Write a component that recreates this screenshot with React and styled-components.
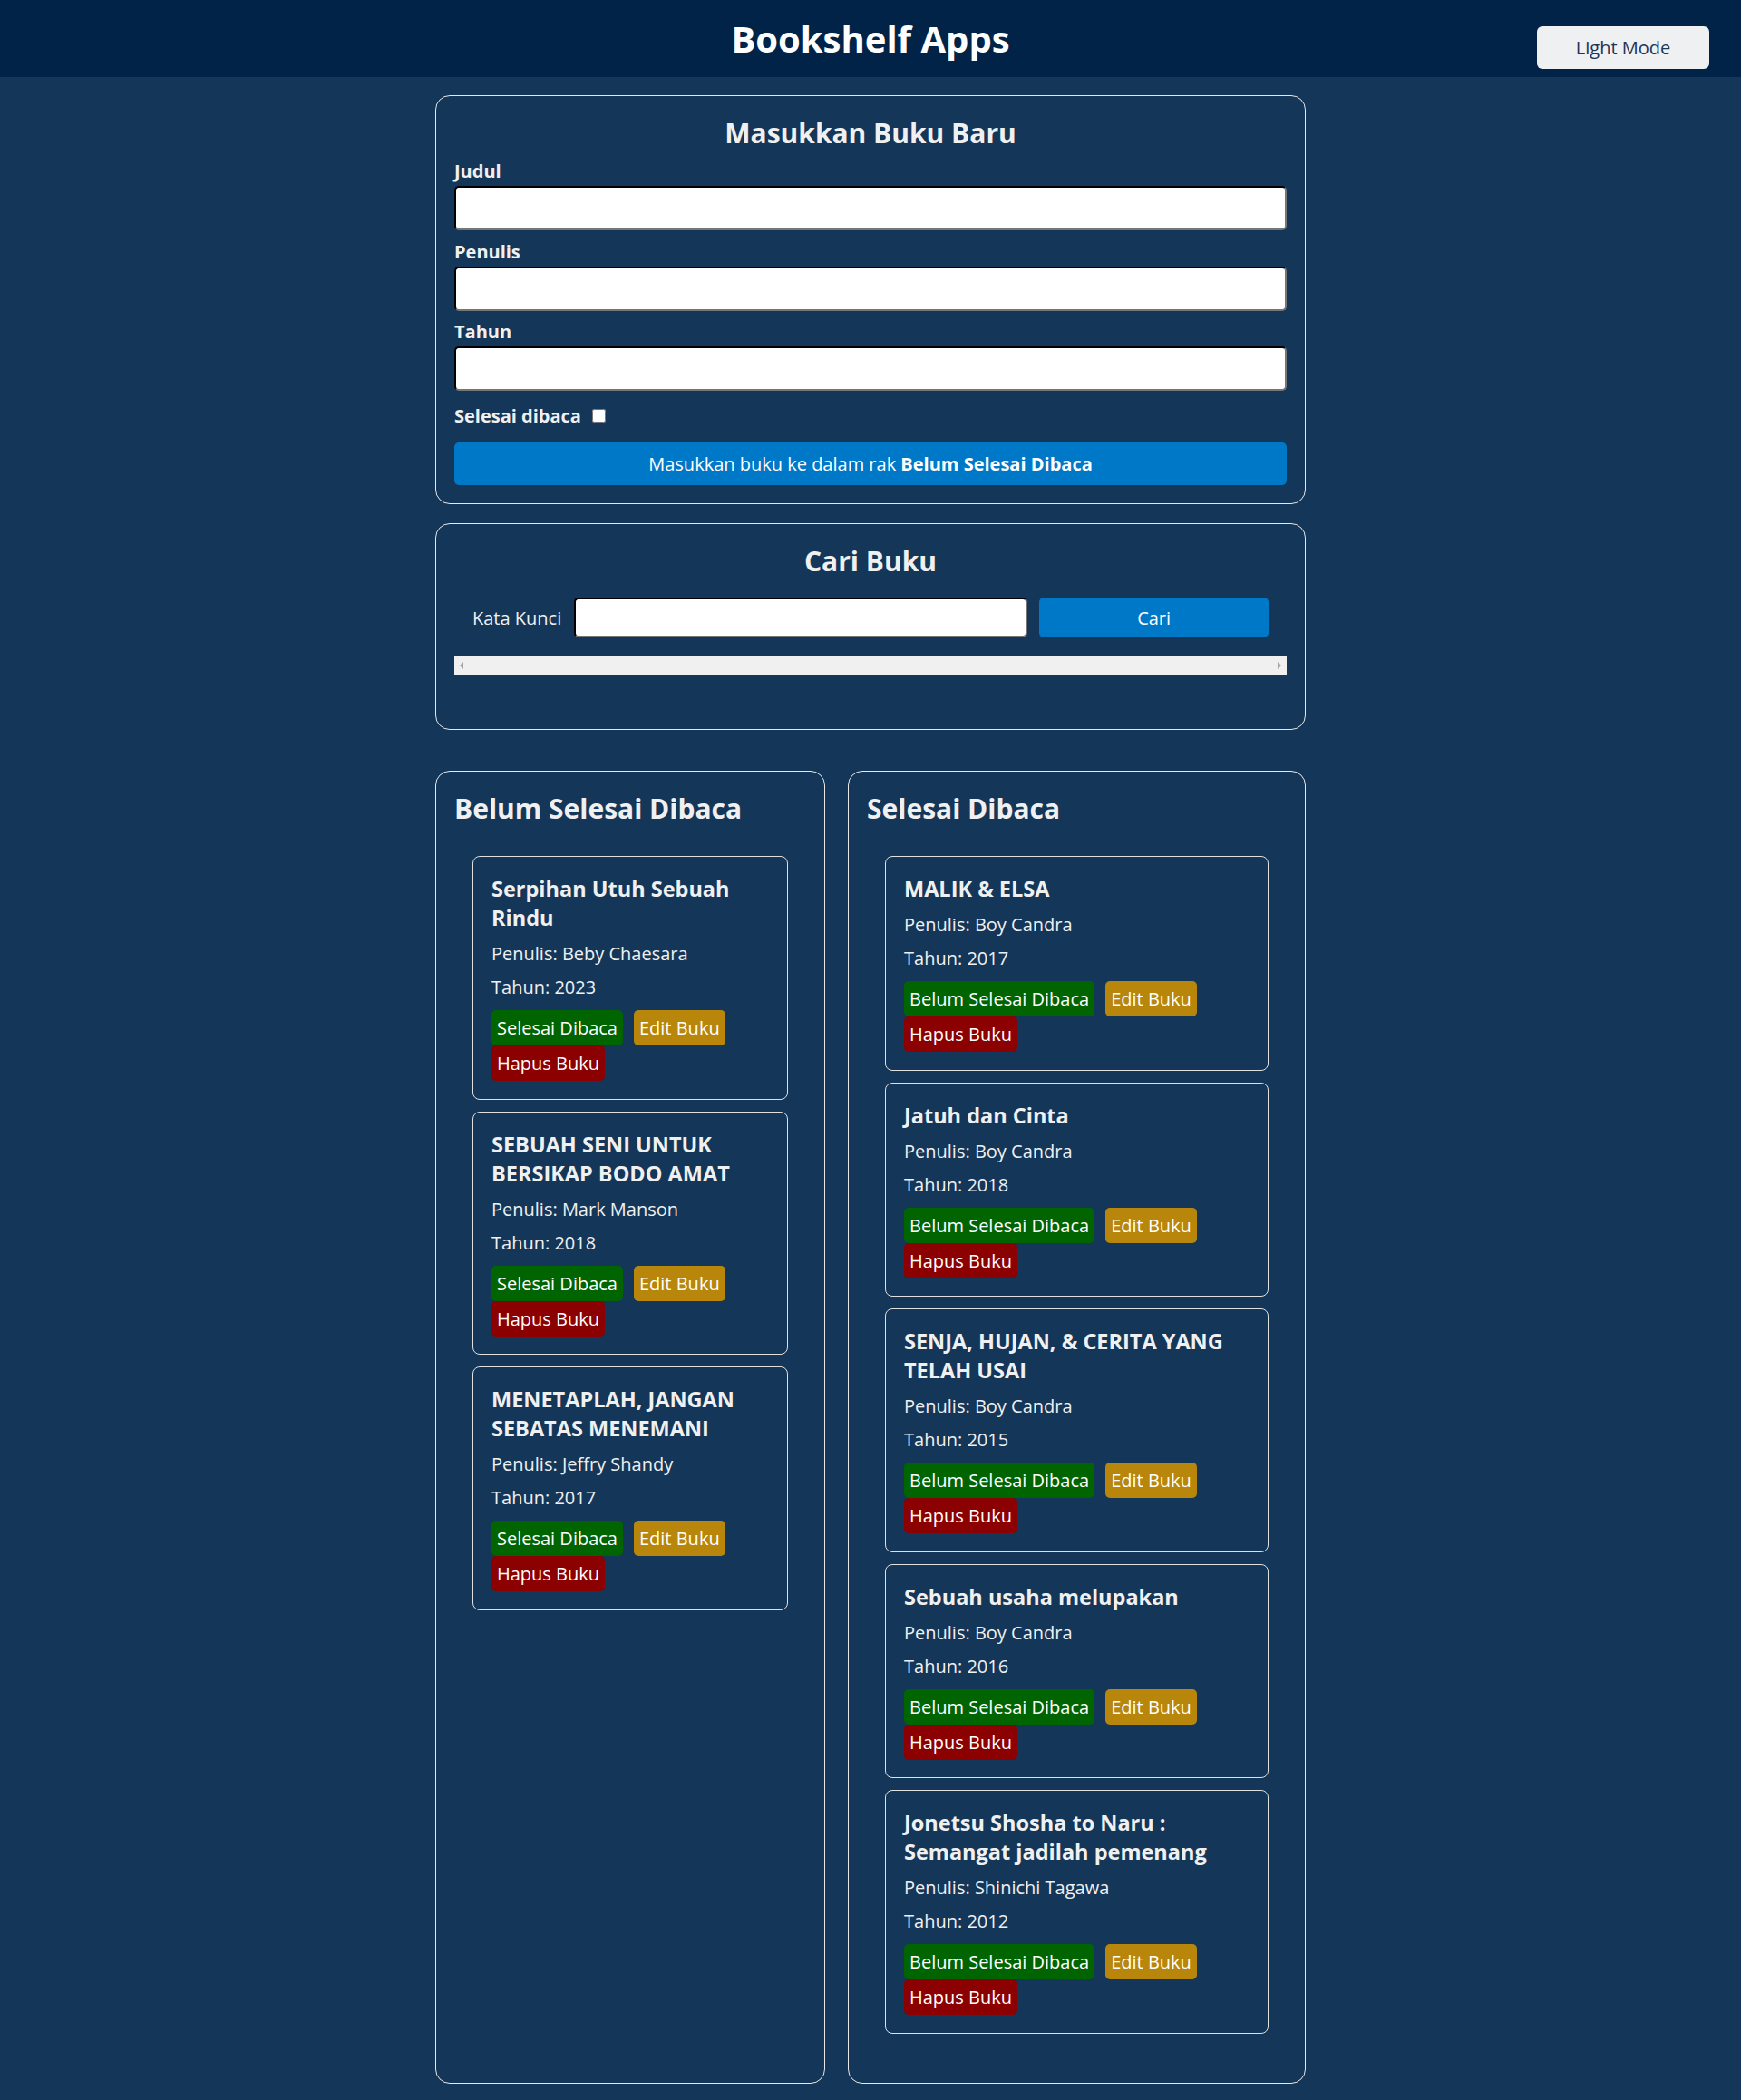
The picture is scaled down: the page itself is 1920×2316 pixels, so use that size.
import React from "react";
import styled, { createGlobalStyle } from "styled-components";

const GlobalStyle = createGlobalStyle`
  html, body { margin: 0; padding: 0; }
  body {
    background: #133659;
    color: #f0f0f0;
    font-family: "Open Sans", "Noto Sans", sans-serif;
  }
  * { box-sizing: border-box; }
`;

const Header = styled.header`
  height: 85px;
  background: #002347;
  display: flex;
  align-items: center;
  justify-content: center;
  position: relative;
`;

const AppTitle = styled.h1`
  margin: 0;
  font-size: 40px;
  font-weight: 700;
  color: #ffffff;
`;

const ModeButton = styled.button`
  position: absolute;
  right: 35px;
  top: 29px;
  width: 190px;
  height: 47px;
  background: #eef0f2;
  border: none;
  border-radius: 6px;
  color: #1d3557;
  font-family: "Open Sans", sans-serif;
  font-size: 20px;
`;

const Main = styled.main`
  width: 960px;
  margin: 20px auto 21px;
  display: flex;
  flex-direction: column;
`;

const Section = styled.section`
  border: 1.5px solid #e8e8e8;
  border-radius: 16px;
  padding: 20px;
  margin-bottom: ${(p) => p.$mb || 0}px;
`;

const SectionTitle = styled.h2`
  margin: 0;
  font-size: 30px;
  line-height: 41px;
  font-weight: 700;
  text-align: ${(p) => p.$align || "center"};
  color: #f0f0f0;
`;

const FieldLabel = styled.label`
  display: block;
  font-size: 20px;
  font-weight: 700;
  line-height: 25px;
  margin-top: ${(p) => p.$mt}px;
  margin-bottom: 4px;
`;

const TextInput = styled.input`
  display: block;
  width: 100%;
  height: 49px;
  background: #fff;
  border: 2px inset #767676;
  border-top-color: #1a1a1a;
  border-left-color: #1a1a1a;
  border-radius: 5px;
  font-size: 18px;
`;

const CheckRow = styled.div`
  display: flex;
  align-items: center;
  gap: 12px;
  margin-top: 15px;
  font-size: 20px;
  font-weight: 700;
  line-height: 25px;
`;

const CheckBox = styled.input`
  width: 15px;
  height: 15px;
  margin: 0;
`;

const SubmitButton = styled.button`
  width: 100%;
  height: 47px;
  margin-top: 17px;
  background: #0078c8;
  border: none;
  border-radius: 5px;
  color: #fff;
  font-family: "Open Sans", sans-serif;
  font-size: 20px;
  b { font-weight: 700; }
`;

const SearchRow = styled.div`
  display: flex;
  align-items: center;
  margin-top: 20px;
  padding: 0 20px;
  gap: 13px;
`;

const SearchLabel = styled.label`
  font-size: 20px;
  margin-right: 1px;
`;

const SearchInput = styled.input`
  width: 500px;
  height: 44px;
  background: #fff;
  border: 2px inset #767676;
  border-top-color: #1a1a1a;
  border-left-color: #1a1a1a;
  border-radius: 5px;
`;

const SearchButton = styled.button`
  flex: 1;
  height: 44px;
  background: #0078c8;
  border: none;
  border-radius: 5px;
  color: #fff;
  font-family: "Open Sans", sans-serif;
  font-size: 20px;
`;

const FakeScroll = styled.div`
  margin-top: 20px;
  margin-bottom: 40px;
  height: 21px;
  background: #f0f0f0;
  display: flex;
  align-items: center;
  justify-content: space-between;
  padding: 0 6px;
`;

const Arrow = styled.span`
  width: 0;
  height: 0;
  border-top: 4px solid transparent;
  border-bottom: 4px solid transparent;
  ${(p) =>
    p.$dir === "left"
      ? "border-right: 4px solid #a3a3a3;"
      : "border-left: 4px solid #a3a3a3;"}
`;

const Shelves = styled.div`
  display: grid;
  grid-template-columns: 430px 505px;
  column-gap: 25px;
  margin-top: 45px;
`;

const Shelf = styled.section`
  border: 1.5px solid #e8e8e8;
  border-radius: 16px;
  padding: 20px;
`;

const BookList = styled.div`
  display: flex;
  flex-direction: column;
  gap: 13px;
  margin: 32px 20px 34px;
`;

const BookCard = styled.article`
  border: 1.5px solid #e0e0e0;
  border-radius: 8px;
  padding: 19px 20px 19.5px;
`;

const BookTitle = styled.h3`
  margin: 0;
  font-size: 23.5px;
  line-height: 32px;
  font-weight: 700;
  color: #f0f0f0;
`;

const BookMeta = styled.p`
  margin: 10px 0 0;
  font-size: 20px;
  line-height: 27px;
  color: #f0f0f0;
`;

const ActionRow = styled.div`
  display: flex;
  flex-wrap: wrap;
  column-gap: 12px;
  margin-top: 12px;
`;

const ActionButton = styled.button`
  background: ${(p) => p.$bg};
  color: #fff;
  border: none;
  border-radius: 5px;
  height: 39px;
  padding: 0 6px;
  font-family: "Open Sans", sans-serif;
  font-size: 20px;
`;

const unread = [
  { title: "Serpihan Utuh Sebuah Rindu", author: "Beby Chaesara", year: 2023 },
  { title: "SEBUAH SENI UNTUK BERSIKAP BODO AMAT", author: "Mark Manson", year: 2018 },
  { title: "MENETAPLAH, JANGAN SEBATAS MENEMANI", author: "Jeffry Shandy", year: 2017 },
];

const read = [
  { title: "MALIK & ELSA", author: "Boy Candra", year: 2017 },
  { title: "Jatuh dan Cinta", author: "Boy Candra", year: 2018 },
  { title: "SENJA, HUJAN, & CERITA YANG TELAH USAI", author: "Boy Candra", year: 2015 },
  { title: "Sebuah usaha melupakan", author: "Boy Candra", year: 2016 },
  { title: "Jonetsu Shosha to Naru : Semangat jadilah pemenang", author: "Shinichi Tagawa", year: 2012 },
];

function Book({ book, done }) {
  return (
    <BookCard>
      <BookTitle>{book.title}</BookTitle>
      <BookMeta>Penulis: {book.author}</BookMeta>
      <BookMeta>Tahun: {book.year}</BookMeta>
      <ActionRow>
        <ActionButton $bg="#006400">{done ? "Belum Selesai Dibaca" : "Selesai Dibaca"}</ActionButton>
        <ActionButton $bg="#b8860b">Edit Buku</ActionButton>
        <ActionButton $bg="#8b0000">Hapus Buku</ActionButton>
      </ActionRow>
    </BookCard>
  );
}

export default function App() {
  return (
    <>
      <GlobalStyle />
      <Header>
        <AppTitle>Bookshelf Apps</AppTitle>
        <ModeButton>Light Mode</ModeButton>
      </Header>
      <Main>
        <Section $mb={21}>
          <SectionTitle>Masukkan Buku Baru</SectionTitle>
          <FieldLabel $mt={9}>Judul</FieldLabel>
          <TextInput type="text" />
          <FieldLabel $mt={11}>Penulis</FieldLabel>
          <TextInput type="text" />
          <FieldLabel $mt={10}>Tahun</FieldLabel>
          <TextInput type="number" />
          <CheckRow>
            <span>Selesai dibaca</span>
            <CheckBox type="checkbox" />
          </CheckRow>
          <SubmitButton>
            Masukkan buku ke dalam rak <b>Belum Selesai Dibaca</b>
          </SubmitButton>
        </Section>
        <Section>
          <SectionTitle>Cari Buku</SectionTitle>
          <SearchRow>
            <SearchLabel>Kata Kunci</SearchLabel>
            <SearchInput type="text" />
            <SearchButton>Cari</SearchButton>
          </SearchRow>
          <FakeScroll>
            <Arrow $dir="left" />
            <Arrow $dir="right" />
          </FakeScroll>
        </Section>
        <Shelves>
          <Shelf>
            <SectionTitle $align="left">Belum Selesai Dibaca</SectionTitle>
            <BookList>
              {unread.map((b) => (
                <Book key={b.title} book={b} />
              ))}
            </BookList>
          </Shelf>
          <Shelf>
            <SectionTitle $align="left">Selesai Dibaca</SectionTitle>
            <BookList>
              {read.map((b) => (
                <Book key={b.title} book={b} done />
              ))}
            </BookList>
          </Shelf>
        </Shelves>
      </Main>
    </>
  );
}
